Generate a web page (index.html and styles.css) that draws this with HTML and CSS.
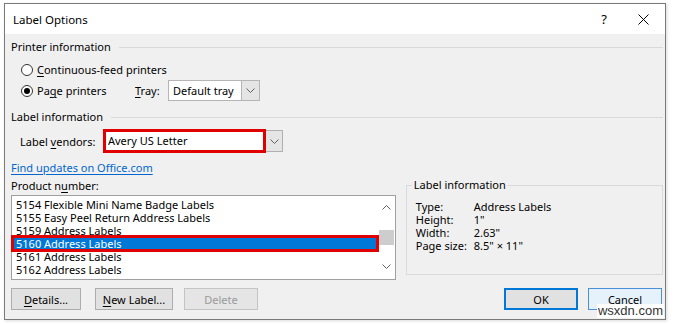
FILE: index.html
```html
<!DOCTYPE html>
<html>
<head>
<meta charset="utf-8">
<link rel="stylesheet" href="styles.css">
</head>
<body>
<div class="dialog">
  <div class="titlebar">
    <span class="title">Label Options</span>
    <span class="help">?</span>
    <svg class="close" width="11" height="11" viewBox="0 0 11 11"><path d="M0.5 0.5 L10.5 10.5 M10.5 0.5 L0.5 10.5" stroke="#000" stroke-width="1" fill="none"/></svg>
  </div>
  <div class="body">
    <div class="section-head"><span>Printer information</span></div>
    <div class="radio-row">
      <span class="radio"></span>
      <span><u>C</u>ontinuous-feed printers</span>
    </div>
    <div class="radio-row">
      <span class="radio checked"></span>
      <span class="page-label">Pa<u>g</u>e printers</span>
      <span class="tray-label"><u>T</u>ray:</span>
      <div class="combo tray">
        <span class="combo-text">Default tray</span>
        <span class="combo-btn"><svg width="9" height="5" viewBox="0 0 9 5"><path d="M0.5 0.5 L4.5 4.5 L8.5 0.5" stroke="#606060" fill="none"/></svg></span>
      </div>
    </div>

    <div class="section-head second"><span>Label information</span></div>
    <div class="vendor-row">
      <span class="vendor-label">Label <u>v</u>endors:</span>
      <div class="vendor-combo">
        <div class="vendor-box">Avery US Letter</div>
        <span class="combo-btn vendor-btn"><svg width="9" height="5" viewBox="0 0 9 5"><path d="M0.5 0.5 L4.5 4.5 L8.5 0.5" stroke="#606060" fill="none"/></svg></span>
      </div>
    </div>
    <a class="link">Find updates on Office.com</a>

    <div class="bottom">
      <div class="left-col">
        <div class="pn-label">Product n<u>u</u>mber:</div>
        <div class="listbox">
          <div class="items">
            <div class="item">5154 Flexible Mini Name Badge Labels</div>
            <div class="item">5155 Easy Peel Return Address Labels</div>
            <div class="item">5159 Address Labels</div>
            <div class="item selected">5160 Address Labels</div>
            <div class="item">5161 Address Labels</div>
            <div class="item">5162 Address Labels</div>
          </div>
          <div class="scrollbar">
            <svg class="arrow" width="9" height="5" viewBox="0 0 9 5"><path d="M0.5 4.5 L4.5 0.5 L8.5 4.5" stroke="#606060" fill="none"/></svg>
            <div class="thumb"></div>
            <svg class="arrow" width="9" height="5" viewBox="0 0 9 5"><path d="M0.5 0.5 L4.5 4.5 L8.5 0.5" stroke="#606060" fill="none"/></svg>
          </div>
        </div>
      </div>
      <div class="info-group">
        <span class="info-title">Label information</span>
        <div class="info-grid">
          <span>Type:</span><span>Address Labels</span>
          <span>Height:</span><span>1"</span>
          <span>Width:</span><span>2.63"</span>
          <span>Page size:</span><span>8.5" × 11"</span>
        </div>
      </div>
    </div>

    <div class="buttons">
      <button class="btn details"><u>D</u>etails...</button>
      <button class="btn newlabel"><u>N</u>ew Label...</button>
      <button class="btn delete" disabled>Delete</button>
      <span class="spacer"></span>
      <button class="btn ok">OK</button>
      <button class="btn cancel">Cancel</button>
    </div>
  </div>
  <span class="watermark">wsxdn.com</span>
</div>
</body>
</html>
```

FILE: styles.css
```css
* { box-sizing: border-box; }
html, body { margin: 0; padding: 0; background: #ffffff; }
body {
  font-family: "Noto Sans", "Liberation Sans", sans-serif;
  font-size: 11px;
  color: #000;
  width: 674px;
  height: 323px;
  overflow: hidden;
}
u { text-decoration: underline; text-underline-offset: 2px; }

.dialog {
  position: relative;
  margin: 3px 0 0 4px;
  width: 662px;
  height: 317px;
  border: 1px solid #7a7a7a;
  background: #f0f0f0;
  display: flex;
  flex-direction: column;
  box-shadow: 1px 1px 3px rgba(0,0,0,0.15);
}

.titlebar {
  height: 30px;
  background: #fff;
  display: flex;
  align-items: center;
  padding-left: 8px;
  flex: none;
}
.title { font-size: 11.5px; flex: 1; }
.help { font-size: 13px; margin-right: 31px; }
.close { margin-right: 16px; }

.body {
  flex: 1;
  padding: 6px 2px 0 6px;
  display: flex;
  flex-direction: column;
}

.section-head {
  height: 14px;
  display: flex;
  align-items: center;
  line-height: 14px;
}
.section-head::after {
  content: "";
  flex: 1;
  height: 1px;
  background: #d9d9d9;
  margin-left: 8px;
}
.section-head.second { margin-top: 9px; }

.radio-row {
  height: 21px;
  display: flex;
  align-items: center;
  padding-left: 10px;
}
.section-head + .radio-row { margin-top: 5px; }
.radio {
  width: 12px;
  height: 12px;
  border: 1px solid #333;
  border-radius: 50%;
  background: #fff;
  margin-right: 4px;
  position: relative;
  flex: none;
}
.radio.checked::after {
  content: "";
  position: absolute;
  left: 2px; top: 2px;
  width: 6px; height: 6px;
  border-radius: 50%;
  background: #000;
}
.page-label { width: 98px; }
.tray-label { width: 33px; }

.combo {
  display: flex;
  height: 21px;
  border: 1px solid #b5b5b5;
  background: #fff;
}
.combo.tray { width: 92px; }
.combo-text { flex: 1; padding-left: 4px; line-height: 19px; }
.combo-btn {
  width: 18px;
  background: #e5e5e5;
  border-left: 1px solid #b5b5b5;
  display: flex;
  align-items: center;
  justify-content: center;
}

.vendor-row {
  margin-top: 5px;
  height: 24px;
  display: flex;
  align-items: center;
  padding-left: 9px;
}
.vendor-label { width: 83px; }
.vendor-combo { display: flex; height: 24px; align-items: center; }
.vendor-box {
  width: 163px;
  height: 24px;
  border: 3px solid #e00000;
  background: #fff;
  line-height: 18px;
  padding-left: 2px;
}
.vendor-btn {
  height: 22px;
  width: 17px;
  border: 1px solid #b0b0b0;
  border-left: none;
}

.link {
  margin-top: 8px;
  height: 14px;
  line-height: 14px;
  color: #0066cc;
  text-decoration: underline;
  text-underline-offset: 2px;
  align-self: flex-start;
}

.bottom {
  margin-top: 4px;
  display: flex;
  gap: 10px;
}
.left-col { width: 386px; }
.pn-label { height: 14px; line-height: 14px; margin-bottom: 2px; }
.listbox {
  height: 85px;
  border: 1px solid #a0a0a0;
  background: #fff;
  display: flex;
}
.items { flex: 1; padding-top: 2px; }
.item {
  height: 13px;
  line-height: 13px;
  padding-left: 4px;
  white-space: nowrap;
}
.item.selected {
  background: #0078d7;
  color: #fff;
  outline: 3px solid #e00000;
  outline-offset: -2px;
  height: 15px;
  line-height: 15px;
  margin: -1px 0;
  position: relative;
}
.scrollbar {
  width: 17px;
  background: #fff;
  display: flex;
  flex-direction: column;
  align-items: center;
  padding: 9px 0 10px;
}
.scrollbar .arrow { flex: none; }
.thumb {
  width: 15px;
  height: 15px;
  background: #cdcdcd;
  margin: 20px 0 auto;
}

.info-group {
  position: relative;
  margin-top: 6px;
  width: 258px;
  height: 90px;
  border: 1px solid #d9d9d9;
  padding: 14px 0 0 9px;
}
.info-title {
  position: absolute;
  top: -8px;
  left: 5px;
  padding: 0 2px;
  background: #f0f0f0;
  line-height: 14px;
}
.info-grid {
  display: grid;
  grid-template-columns: 58px auto;
  grid-auto-rows: 13px;
  line-height: 13px;
}

.buttons {
  margin-top: 8px;
  display: flex;
  height: 22px;
}
.btn {
  font-family: inherit;
  font-size: 11px;
  height: 22px;
  background: #e1e1e1;
  border: 1px solid #adadad;
  color: #000;
  padding: 0;
}
.details { width: 70px; }
.newlabel { width: 78px; margin-left: 14px; }
.delete { width: 74px; margin-left: 11px; color: #9a9a9a; background: #e5e5e5; border-color: #c4c4c4; }
.spacer { flex: 1; }
.ok { width: 74px; border: 2px solid #0078d7; }
.cancel { width: 74px; margin-left: 10px; margin-right: 1px; background: #e5f1fb; border-color: #4a90d9; }

.watermark {
  position: absolute;
  right: 1px;
  bottom: 1px;
  font-family: "Liberation Sans", sans-serif;
  font-size: 13px;
  color: #333;
  background: #fff;
  padding: 0 1px;
  line-height: 14px;
}
```
